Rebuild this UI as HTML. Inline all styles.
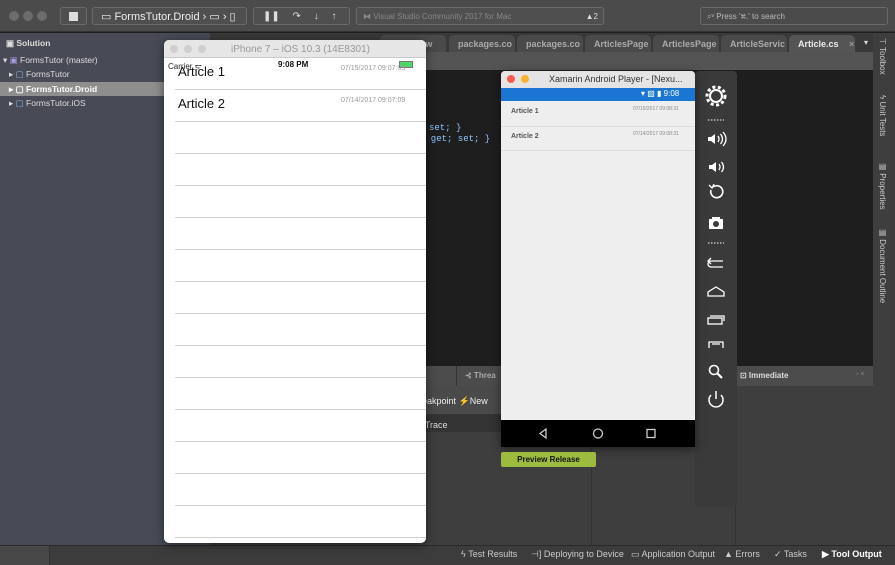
<!DOCTYPE html>
<html><head><meta charset="utf-8"><style>
*{margin:0;padding:0;box-sizing:border-box}
body{width:895px;height:565px;overflow:hidden;position:relative;background:#1e1e1e;font-family:"Liberation Sans",sans-serif;font-size:9px;color:#ddd}
.a{position:absolute}
.btn{position:absolute;border:1px solid #6a6a6a;border-radius:3px;background:#4f4f4f}
.tab{position:absolute;top:35px;height:17px;background:#4a4a4a;border-radius:5px 5px 0 0;color:#aaa;font-weight:bold;font-size:9px;padding:4px 0 0 9px;width:66px;overflow:hidden;white-space:nowrap}
.line{position:absolute;left:175px;width:251px;height:1px;background:#cfcfcf}
.sb{position:absolute;top:549px;font-size:9px;color:#ccc}
</style></head><body>
<div class="a" style="left:0;top:0;width:895px;height:32px;background:#4b4b4b;border-bottom:1px solid #333"></div>
<div class="a" style="left:9px;top:11px;width:10px;height:10px;border-radius:5px;background:#6c6c6c"></div>
<div class="a" style="left:23px;top:11px;width:10px;height:10px;border-radius:5px;background:#6c6c6c"></div>
<div class="a" style="left:37px;top:11px;width:10px;height:10px;border-radius:5px;background:#6c6c6c"></div>
<div class="btn" style="left:60px;top:7px;width:27px;height:18px"><div class="a" style="left:8px;top:4px;width:9px;height:9px;background:#ddd"></div></div>
<div class="btn" style="left:92px;top:7px;width:155px;height:18px;color:#eee;font-size:11px;padding:2px 0 0 8px">▭ FormsTutor.Droid › ▭ › ▯</div>
<div class="btn" style="left:253px;top:7px;width:97px;height:18px;color:#ddd;font-size:10px;padding:3px 0 0 9px;word-spacing:10px">❚❚ ↷ ↓ ↑</div>
<div class="btn" style="left:356px;top:7px;width:248px;height:18px;color:#888;font-size:8px;padding:4px 0 0 6px">⧓ Visual Studio Community 2017 for Mac<span style="position:absolute;right:5px;color:#ddd">▲2</span></div>
<div class="btn" style="left:700px;top:7px;width:188px;height:18px;color:#bbb;font-size:8px;padding:4px 0 0 6px;background:#4b4b4b">⌕ᵛ Press '⌘.' to search</div>
<div class="a" style="left:0;top:33px;width:210px;height:512px;background:#484b56"></div>
<div class="a" style="left:6px;top:38px;color:#ddd;font-weight:bold;font-size:8.5px">▣ Solution</div>
<div class="a" style="left:3px;top:55px;color:#ddd;font-size:8.5px">▾ <span style="color:#a99ce0">▣</span> FormsTutor (master)</div>
<div class="a" style="left:9px;top:69px;color:#ddd;font-size:8.5px">▸ <span style="color:#8ab4e8">▢</span> FormsTutor</div>
<div class="a" style="left:0;top:82px;width:165px;height:14px;background:#8e8e8e"></div>
<div class="a" style="left:9px;top:84px;color:#fff;font-size:8.5px;font-weight:bold">▸ ▢ FormsTutor.Droid</div>
<div class="a" style="left:9px;top:98px;color:#ddd;font-size:8.5px">▸ <span style="color:#8ab4e8">▢</span> FormsTutor.iOS</div>
<div class="a" style="left:210px;top:33px;width:663px;height:19px;background:#393939"></div>
<div class="tab" style="left:380px">ticlesView</div>
<div class="tab" style="left:449px">packages.co</div>
<div class="tab" style="left:517px">packages.co</div>
<div class="tab" style="left:585px">ArticlesPage</div>
<div class="tab" style="left:653px">ArticlesPage</div>
<div class="tab" style="left:721px">ArticleServic</div>
<div class="tab" style="left:789px;background:#555;color:#eee;width:66px">Article.cs <span style="color:#999;margin-left:8px">×</span></div>
<div class="a" style="left:864px;top:38px;color:#ddd;font-size:8px">▾</div>
<div class="a" style="left:210px;top:52px;width:663px;height:18px;background:#545454"></div>
<div class="a" style="left:429px;top:123px;font-family:'Liberation Mono',monospace;font-size:9px;color:#8fc4ff">set; }</div>
<div class="a" style="left:420px;top:134px;font-family:'Liberation Mono',monospace;font-size:9px;color:#8fc4ff">{ get; set; }</div>
<div class="a" style="left:873px;top:33px;width:22px;height:512px;background:#3e3e3e"></div>
<div class="a" style="left:878px;top:38px;writing-mode:vertical-rl;color:#ccc;font-size:8px">⊤ Toolbox</div>
<div class="a" style="left:878px;top:95px;writing-mode:vertical-rl;color:#ccc;font-size:8px">ϟ Unit Tests</div>
<div class="a" style="left:878px;top:162px;writing-mode:vertical-rl;color:#ccc;font-size:8px">▤ Properties</div>
<div class="a" style="left:878px;top:228px;writing-mode:vertical-rl;color:#ccc;font-size:8px">▤ Document Outline</div>
<div class="a" style="left:210px;top:366px;width:663px;height:179px;background:#3e3e3e"></div>
<div class="a" style="left:210px;top:366px;width:663px;height:20px;background:#4c4c4c"></div>
<div class="a" style="left:456px;top:366px;width:1px;height:20px;background:#333"></div>
<div class="a" style="left:465px;top:371px;color:#aaa;font-size:8px;font-weight:bold">⊰ Threa</div>
<div class="a" style="left:210px;top:386px;width:300px;height:28px;background:#4a4a4a"></div>
<div class="a" style="left:422px;top:396px;color:#eee;font-size:9px">eakpoint <span style="color:#e85a3a">⚡</span>New</div>
<div class="a" style="left:210px;top:414px;width:300px;height:18px;background:#333"></div>
<div class="a" style="left:420px;top:420px;color:#ddd;font-size:9px">t Trace</div>
<div class="a" style="left:591px;top:386px;width:1px;height:159px;background:#333"></div>
<div class="a" style="left:735px;top:366px;width:1px;height:179px;background:#333"></div>
<div class="a" style="left:740px;top:371px;color:#ddd;font-size:8px;font-weight:bold">⊡ Immediate</div>
<div class="a" style="left:856px;top:371px;color:#888;font-size:7px">▫ ×</div>
<div class="a" style="left:0;top:545px;width:895px;height:20px;background:#3c3c3c;border-top:1px solid #2a2a2a"></div>
<div class="a" style="left:0;top:546px;width:50px;height:19px;background:#484848;border-right:1px solid #333"></div>
<div class="sb" style="left:461px">ϟ Test Results</div>
<div class="sb" style="left:531px">⊣] Deploying to Device</div>
<div class="sb" style="left:631px">▭ Application Output</div>
<div class="sb" style="left:724px">▲ Errors</div>
<div class="sb" style="left:774px">✓ Tasks</div>
<div class="sb" style="left:822px;color:#fff;font-weight:bold">▶ Tool Output</div>
<div class="a" style="left:164px;top:40px;width:262px;height:503px;background:#fff;border-radius:5px;overflow:hidden;box-shadow:0 2px 10px rgba(0,0,0,.5)">
 <div class="a" style="left:0;top:0;width:262px;height:18px;background:#e6e6e6;border-bottom:1px solid #ccc"></div>
 <div class="a" style="left:6px;top:5px;width:8px;height:8px;border-radius:4px;background:#cfcfcf"></div>
 <div class="a" style="left:20px;top:5px;width:8px;height:8px;border-radius:4px;background:#cfcfcf"></div>
 <div class="a" style="left:34px;top:5px;width:8px;height:8px;border-radius:4px;background:#cfcfcf"></div>
 <div class="a" style="left:67px;top:4px;color:#999;font-size:10px">iPhone 7 – iOS 10.3 (14E8301)</div>
 <div class="a" style="left:4px;top:21px;color:#222;font-size:8px">Carrier ᯤ</div>
 <div class="a" style="left:114px;top:20px;color:#111;font-size:8px;font-weight:bold">9:08 PM</div>
 <div class="a" style="left:235px;top:21px;width:14px;height:7px;background:#4cd964;border:1px solid #777"></div>
 <div class="a" style="left:14px;top:24px;color:#111;font-size:13px">Article 1</div>
 <div class="a" style="left:177px;top:25px;color:#999;font-size:7px">07/15/2017 09:07:09</div>
 <div class="a" style="left:14px;top:56px;color:#111;font-size:13px">Article 2</div>
 <div class="a" style="left:177px;top:57px;color:#999;font-size:7px">07/14/2017 09:07:09</div>
</div>
<div class="line" style="top:89px"></div><div class="line" style="top:121px"></div><div class="line" style="top:153px"></div><div class="line" style="top:185px"></div><div class="line" style="top:217px"></div><div class="line" style="top:249px"></div><div class="line" style="top:281px"></div><div class="line" style="top:313px"></div><div class="line" style="top:345px"></div><div class="line" style="top:377px"></div><div class="line" style="top:409px"></div><div class="line" style="top:441px"></div><div class="line" style="top:473px"></div><div class="line" style="top:505px"></div><div class="line" style="top:537px"></div>
<div class="a" style="left:695px;top:71px;width:42px;height:436px;background:#3a3a3a;border-radius:4px"></div>
<svg class="a" style="left:695px;top:71px" width="42" height="345" viewBox="0 0 42 345" fill="none" stroke="#fff" stroke-width="2">
 <circle cx="21" cy="25" r="6"/><circle cx="21" cy="25" r="9" stroke-dasharray="3 2.5" stroke-width="3"/>
 <line x1="13" y1="49" x2="29" y2="49" stroke-width="1" stroke-dasharray="1.5 1.5"/>
 <path d="M13 66h3l4-3v10l-4-3h-3z" fill="#fff" stroke="none"/><path d="M23 65q2 3 0 6M25.5 63q4 5 0 10M28 61q6 7 0 14" stroke-width="1.3"/>
 <path d="M14 94h3l4-3v10l-4-3h-3z" fill="#fff" stroke="none"/><path d="M24 93q2 3 0 6M26.5 91q4 5 0 10" stroke-width="1.3"/>
 <path d="M16 119a6 6 0 1 0 2-3" stroke-width="1.6"/><path d="M14 114l3 3 2-4" stroke-width="1.3"/>
 <rect x="14" y="148" width="14" height="10" fill="#fff" stroke="none"/><rect x="17" y="146" width="8" height="3" fill="#fff" stroke="none"/><circle cx="21" cy="153" r="3" fill="#3a3a3a" stroke="none"/>
 <line x1="13" y1="172" x2="29" y2="172" stroke-width="1" stroke-dasharray="1.5 1.5"/>
 <path d="M28 196h-12a3 3 0 0 1 0-6h12M16 187l-3 3 3 3" stroke-width="1.3"/>
 <path d="M13 225v-4l8-5 8 5v4z" stroke-width="1.3"/>
 <rect x="13" y="247" width="14" height="6" stroke-width="1.3"/><path d="M15 245h14v5" stroke-width="1.3"/>
 <path d="M14 277v-6h14v6M17 273h8" stroke-width="1.3"/>
 <circle cx="19" cy="299" r="4.5" stroke-width="1.6"/><path d="M22 302l5 5" stroke-width="2.2"/>
 <path d="M16 324a7 7 0 1 0 10 0M21 320v8" stroke-width="1.5"/>
</svg>
<div class="a" style="left:501px;top:71px;width:194px;height:376px;background:#eeeeee;border-radius:4px 4px 0 0;overflow:hidden;box-shadow:0 2px 10px rgba(0,0,0,.5)">
 <div class="a" style="left:0;top:0;width:194px;height:17px;background:#e4e4e4"></div>
 <div class="a" style="left:6px;top:4px;width:8px;height:8px;border-radius:4px;background:#fc5c55"></div>
 <div class="a" style="left:20px;top:4px;width:8px;height:8px;border-radius:4px;background:#fcb42e"></div>
 <div class="a" style="left:48px;top:3px;color:#333;font-size:9px;white-space:nowrap">Xamarin Android Player - [Nexu...</div>
 <div class="a" style="left:0;top:17px;width:194px;height:13px;background:#1a76d2"></div>
 <div class="a" style="left:140px;top:18px;color:#fff;font-size:8px">▾ ▨ ▮ 9:08</div>
 <div class="a" style="left:10px;top:37px;color:#555;font-size:7px;font-weight:bold">Article 1</div>
 <div class="a" style="left:132px;top:35px;color:#888;font-size:5px">07/15/2017 09:08:31</div>
 <div class="a" style="left:0;top:55px;width:194px;height:1px;background:#ddd"></div>
 <div class="a" style="left:10px;top:62px;color:#555;font-size:7px;font-weight:bold">Article 2</div>
 <div class="a" style="left:132px;top:60px;color:#888;font-size:5px">07/14/2017 09:08:31</div>
 <div class="a" style="left:0;top:79px;width:194px;height:1px;background:#ddd"></div>
 <div class="a" style="left:0;top:349px;width:194px;height:27px;background:#000"></div>
 <svg class="a" style="left:0;top:349px" width="194" height="27" fill="none" stroke="#ccc" stroke-width="1.3"><path d="M39 13.5l6-4.5v9z"/><circle cx="97" cy="13.5" r="4.5"/><rect x="146" y="9.5" width="8" height="8"/></svg>
</div>
<div class="a" style="left:501px;top:452px;width:95px;height:15px;background:#9dbb3e;border-radius:2px;color:#111;font-size:8px;font-weight:bold;text-align:center;padding-top:3px">Preview Release</div>
</body></html>
